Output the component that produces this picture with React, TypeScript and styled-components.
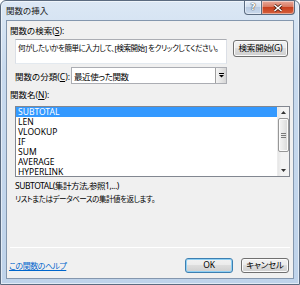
import React from "react";
import styled, { createGlobalStyle } from "styled-components";

const GlobalStyle = createGlobalStyle`
  html, body { margin: 0; padding: 0; background: #ffffff; }
  body {
    font-family: "Noto Sans", "Noto Sans CJK JP", sans-serif;
    font-size: 8.5px;
    color: #000;
    font-feature-settings: "palt";
  }
  * { box-sizing: border-box; }
`;

const Window = styled.div`
  width: 300px;
  height: 285px;
  border: 1px solid #5b6b80;
  border-radius: 6px 6px 0 0;
  background: linear-gradient(180deg, #dce8f5 0%, #c8daee 25%, #bfd3ea 100%);
  box-shadow: inset 0 0 0 1px rgba(255, 255, 255, 0.55);
  display: flex;
  flex-direction: column;
  padding: 0 5px 5px 5px;
`;

const TitleBar = styled.div`
  height: 19px;
  display: flex;
  align-items: flex-start;
`;

const Title = styled.div`
  flex: 1;
  line-height: 18px;
  margin-top: 1px;
  font-size: 8.5px;
  color: #1b1b1b;
`;

const Caption = styled.div`
  display: flex;
  margin-right: -1px;
  height: 14px;
`;

const CapBtn = styled.div<{ $close?: boolean }>`
  width: ${(p) => (p.$close ? "33px" : "18px")};
  height: 14px;
  border: 1px solid #5a6b80;
  border-top: none;
  border-left: ${(p) => (p.$close ? "none" : "1px solid #5a6b80")};
  border-radius: ${(p) => (p.$close ? "0 0 4px 0" : "0 0 0 4px")};
  background: ${(p) =>
    p.$close
      ? "linear-gradient(180deg, #e9a99b 0%, #d9785f 45%, #c8401f 50%, #d5603d 100%)"
      : "linear-gradient(180deg, #e6eef8 0%, #d0deee 45%, #b9cbe2 50%, #c9d9ec 100%)"};
  box-shadow: inset 0 0 0 1px rgba(255, 255, 255, 0.45);
  display: flex;
  align-items: center;
  justify-content: center;
`;

const QMark = styled.span`
  font-family: "DejaVu Sans", sans-serif;
  font-size: 9px;
  font-weight: bold;
  color: #ffffff;
  text-shadow: 0 0 1px #333, 0 0 1px #333;
  line-height: 1;
`;

const Client = styled.div`
  flex: 1;
  background: #f0f0f0;
  border: 1px solid #8497ae;
  display: flex;
  flex-direction: column;
  padding: 4px 3px 5px 3px;
`;

const Label = styled.div<{ $top?: number }>`
  line-height: 12px;
  height: 12px;
  margin-top: ${(p) => p.$top ?? 0}px;
  white-space: nowrap;
`;

const SearchRow = styled.div`
  display: flex;
  align-items: flex-start;
  margin-top: 2px;
  height: 25px;
`;

const SearchBox = styled.div`
  margin-left: 5px;
  width: 212px;
  height: 25px;
  background: #fff;
  border: 1px solid #abadb3;
  border-left-color: #dbdfe6;
  border-right-color: #dbdfe6;
  border-bottom-color: #e3e9ef;
  padding: 2px 0 0 2px;
  line-height: 12px;
  font-size: 7.5px;
  letter-spacing: -0.45px;
  white-space: nowrap;
  overflow: hidden;
`;

const Button = styled.div<{ $w: number; $h: number; $default?: boolean }>`
  width: ${(p) => p.$w}px;
  height: ${(p) => p.$h}px;
  border: 1px solid ${(p) => (p.$default ? "#3c7fb1" : "#707070")};
  border-radius: 3px;
  background: linear-gradient(180deg, #f2f2f2 0%, #ebebeb 49%, #dddddd 50%, #cfcfcf 100%);
  box-shadow: inset 0 0 0 1px ${(p) => (p.$default ? "#8fd0f4" : "#fbfbfb")};
  display: flex;
  align-items: center;
  justify-content: center;
  white-space: nowrap;
  line-height: 1;
  letter-spacing: -0.2px;
`;

const SearchButtonWrap = styled.div`
  margin-left: 6px;
  margin-top: 1px;
`;

const CategoryRow = styled.div`
  display: flex;
  align-items: center;
  margin-top: 3px;
  height: 17px;
`;

const CategoryLabel = styled.div`
  width: 56px;
  margin-left: 5px;
  white-space: nowrap;
`;

const Select = styled.div`
  width: 156px;
  height: 17px;
  background: #fff;
  border: 1px solid #abadb3;
  display: flex;
  align-items: center;
`;

const SelectText = styled.div`
  flex: 1;
  padding-left: 2px;
  letter-spacing: -0.4px;
  white-space: nowrap;
`;

const DropBtn = styled.div`
  width: 11px;
  height: 15px;
  border-left: 1px solid #a0a0a0;
  background: linear-gradient(90deg, #f4f4f4, #e2e2e2 60%, #d6d6d6);
  display: flex;
  align-items: center;
  justify-content: center;
`;

const ListBox = styled.div`
  margin-top: 5px;
  margin-left: 5px;
  height: 71px;
  background: #fff;
  border: 1px solid #828790;
  display: flex;
`;

const List = styled.div`
  flex: 1;
  overflow: hidden;
`;

const Item = styled.div<{ $sel?: boolean }>`
  height: 10px;
  line-height: 10px;
  padding-left: 2px;
  background: ${(p) => (p.$sel ? "#3399ff" : "transparent")};
  color: ${(p) => (p.$sel ? "#ffffff" : "#000000")};
  white-space: nowrap;
`;

const ScrollBar = styled.div`
  width: 12px;
  background: linear-gradient(90deg, #e6e6e6 0%, #f3f3f3 30%, #f3f3f3 100%);
  border-left: 1px solid #ececec;
  display: flex;
  flex-direction: column;
  align-items: center;
`;

const ArrowBox = styled.div`
  height: 11px;
  width: 100%;
  display: flex;
  align-items: center;
  justify-content: center;
`;

const Thumb = styled.div`
  width: 11px;
  height: 34px;
  border: 1px solid #979797;
  border-radius: 2px;
  background: linear-gradient(90deg, #f5f5f5 0%, #e8e8e8 50%, #d8d8d8 100%);
  box-shadow: inset 0 0 0 1px #fbfbfb;
  display: flex;
  flex-direction: column;
  align-items: center;
  justify-content: center;
  gap: 1px;
`;

const Grip = styled.div`
  width: 5px;
  height: 1px;
  background: #7a7a7a;
`;

const Track = styled.div`
  flex: 1;
`;

const TextLine = styled.div<{ $top: number; $size: number }>`
  margin-top: ${(p) => p.$top}px;
  margin-left: 5px;
  line-height: 12px;
  height: 12px;
  font-size: ${(p) => p.$size}px;
  letter-spacing: -0.45px;
  white-space: nowrap;
`;

const Spacer = styled.div`
  flex: 1;
`;

const Separator = styled.div`
  height: 1px;
  background: #dfdfdf;
  border-bottom: 1px solid #ffffff;
`;

const Footer = styled.div`
  margin-top: 10px;
  height: 15px;
  display: flex;
  align-items: center;
`;

const HelpLink = styled.a`
  color: #0066cc;
  text-decoration: underline;
  margin-left: -1px;
  font-size: 8px;
  letter-spacing: -0.5px;
  flex: 1;
  white-space: nowrap;
`;

const FooterButtons = styled.div`
  display: flex;
  gap: 8px;
  margin-right: 1px;
`;

const items = ["SUBTOTAL", "LEN", "VLOOKUP", "IF", "SUM", "AVERAGE", "HYPERLINK"];

export default function App() {
  return (
    <>
      <GlobalStyle />
      <Window>
        <TitleBar>
          <Title>関数の挿入</Title>
          <Caption>
            <CapBtn>
              <QMark>?</QMark>
            </CapBtn>
            <CapBtn $close>
              <svg width="10" height="8" viewBox="0 0 10 8">
                <path d="M1.5 1 L8.5 7 M8.5 1 L1.5 7" stroke="#4a1c10" strokeWidth="3" />
                <path d="M1.5 1 L8.5 7 M8.5 1 L1.5 7" stroke="#ffffff" strokeWidth="1.6" />
              </svg>
            </CapBtn>
          </Caption>
        </TitleBar>
        <Client>
          <Label>
            関数の検索(<u>S</u>):
          </Label>
          <SearchRow>
            <SearchBox>何がしたいかを簡単に入力して、[検索開始] をクリックしてください。</SearchBox>
            <SearchButtonWrap>
              <Button $w={55} $h={17}>
                検索開始(G)
              </Button>
            </SearchButtonWrap>
          </SearchRow>
          <CategoryRow>
            <CategoryLabel>
              関数の分類(<u>C</u>):
            </CategoryLabel>
            <Select>
              <SelectText>最近使った関数</SelectText>
              <DropBtn>
                <svg width="5" height="5" viewBox="0 0 5 5">
                  <rect x="0" y="0" width="5" height="1" fill="#000" />
                  <path d="M0 2 H5 L2.5 4.5 Z" fill="#000" />
                </svg>
              </DropBtn>
            </Select>
          </CategoryRow>
          <Label $top={5}>
            関数名(<u>N</u>):
          </Label>
          <ListBox>
            <List>
              {items.map((it, i) => (
                <Item key={it} $sel={i === 0}>
                  {it}
                </Item>
              ))}
            </List>
            <ScrollBar>
              <ArrowBox>
                <svg width="5" height="3" viewBox="0 0 5 3">
                  <path d="M0 3 H5 L2.5 0 Z" fill="#333" />
                </svg>
              </ArrowBox>
              <Thumb>
                <Grip />
                <Grip />
                <Grip />
              </Thumb>
              <Track />
              <ArrowBox>
                <svg width="5" height="3" viewBox="0 0 5 3">
                  <path d="M0 0 H5 L2.5 3 Z" fill="#333" />
                </svg>
              </ArrowBox>
            </ScrollBar>
          </ListBox>
          <TextLine $top={3} $size={8.5}>SUBTOTAL(集計方法,参照1,...)</TextLine>
          <TextLine $top={1} $size={7.5}>リストまたはデータベースの集計値を返します。</TextLine>
          <Spacer />
          <Separator />
          <Footer>
            <HelpLink href="#">この関数のヘルプ</HelpLink>
            <FooterButtons>
              <Button $w={48} $h={15} $default>
                OK
              </Button>
              <Button $w={48} $h={15}>
                キャンセル
              </Button>
            </FooterButtons>
          </Footer>
        </Client>
      </Window>
    </>
  );
}
